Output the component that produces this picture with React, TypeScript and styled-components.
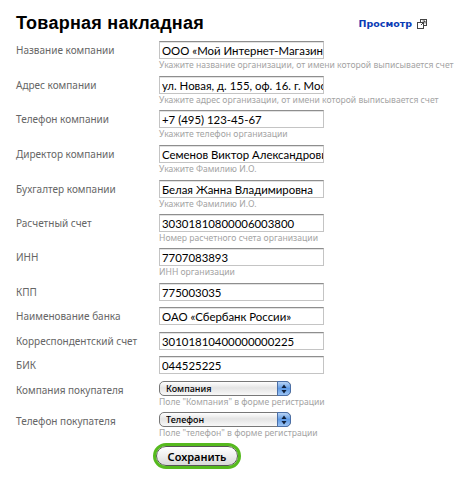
import styled, { createGlobalStyle } from 'styled-components';

const Global = createGlobalStyle`
  html, body {
    margin: 0;
    padding: 0;
    background: #fff;
  }
  body {
    font-family: "Noto Sans", "DejaVu Sans", sans-serif;
  }
`;

const Page = styled.div`
  width: 462px;
  height: 482px;
  padding: 13px 0 0 16px;
  box-sizing: border-box;
  overflow: hidden;
`;

const Header = styled.div`
  display: flex;
  justify-content: space-between;
  align-items: center;
  width: 411px;
  height: 21px;
  margin-bottom: 7px;
`;

const Title = styled.h1`
  margin: 0;
  font: bold 18px/21px "Liberation Sans", Arial, sans-serif;
  letter-spacing: 0.25px;
  color: #000;
`;

const Preview = styled.a`
  display: flex;
  align-items: center;
  gap: 5px;
  font-family: "DejaVu Sans", sans-serif;
  font-size: 9.5px;
  font-weight: bold;
  color: #0b3bb5;
  text-decoration: none;
`;

const Row = styled.div<{ $h: number }>`
  display: grid;
  grid-template-columns: 143px 1fr;
  height: ${(p) => p.$h}px;
`;

const Label = styled.label`
  font-size: 10px;
  line-height: 19px;
  color: #666;
`;

const Field = styled.div`
  display: flex;
  flex-direction: column;
  align-items: flex-start;
`;

const Input = styled.input`
  width: 165px;
  height: 18px;
  box-sizing: border-box;
  padding: 1px 0 0 2px;
  border: 1px solid #c4c4c4;
  border-top: 1px solid #8e8e8e;
  border-radius: 0;
  outline: none;
  background: #fff;
  box-shadow: inset 0 1px 0 #e2e2e2;
  font-family: Lato, "Noto Sans", sans-serif;
  font-size: 11.4px;
  color: #000;
`;

const Hint = styled.span`
  margin-top: 1px;
  font-size: 8.6px;
  line-height: 11px;
  white-space: nowrap;
  color: #a4a4a4;
`;

const SelectBox = styled.div`
  position: relative;
  width: 132px;
  height: 15px;
`;

const Select = styled.select`
  appearance: none;
  display: block;
  width: 100%;
  height: 100%;
  box-sizing: border-box;
  padding: 0 16px 0 6px;
  border: 1px solid #777;
  border-radius: 5px;
  background: linear-gradient(#fff 0%, #e4e4e4 45%, #f8f8f8 100%);
  font-family: "Noto Sans", "DejaVu Sans", sans-serif;
  font-size: 9px;
  font-weight: 500;
  color: #000;
`;

const Stepper = styled.span`
  position: absolute;
  top: 0;
  right: 0;
  width: 14px;
  height: 15px;
  display: flex;
  align-items: center;
  justify-content: center;
  border: 1px solid #4a6fa8;
  border-radius: 0 5px 5px 0;
  box-sizing: border-box;
  background: linear-gradient(#b9d4f5 0%, #5f9be6 50%, #9cc4f4 100%);
`;

const SaveRow = styled.div`
  padding: 3px 0 0 140px;
`;

const SaveButton = styled.button`
  display: block;
  width: 82px;
  height: 20px;
  box-sizing: border-box;
  padding: 0;
  border: 1px solid #555;
  border-radius: 10px;
  outline: 3px solid #56ba1e;
  outline-offset: 0;
  background: linear-gradient(#fff 0%, #eee 50%, #d8d8d8 100%);
  font-family: "Noto Sans", "DejaVu Sans", sans-serif;
  font-size: 11px;
  font-weight: 600;
  color: #000;
`;

const fields = [
  { label: 'Название компании', value: 'ООО «Мой Интернет-Магазин»', hint: 'Укажите название организации, от имени которой выписывается счет', h: 35 },
  { label: 'Адрес компании', value: 'ул. Новая, д. 155, оф. 16. г. Москва', hint: 'Укажите адрес организации, от имени которой выписывается счет', h: 34 },
  { label: 'Телефон компании', value: '+7 (495) 123-45-67', hint: 'Укажите телефон организации', h: 35 },
  { label: 'Директор компании', value: 'Семенов Виктор Александрович', hint: 'Укажите Фамилию И.О.', h: 35 },
  { label: 'Бухгалтер компании', value: 'Белая Жанна Владимировна', hint: 'Укажите Фамилию И.О.', h: 34 },
  { label: 'Расчетный счет', value: '30301810800006003800', hint: 'Номер расчетного счета организации', h: 34 },
  { label: 'ИНН', value: '7707083893', hint: 'ИНН организации', h: 35 },
  { label: 'КПП', value: '775003035', h: 24 },
  { label: 'Наименование банка', value: 'ОАО «Сбербанк России»', h: 25 },
  { label: 'Корреспондентский счет', value: '30101810400000000225', h: 24 },
  { label: 'БИК', value: '044525225', h: 25 },
];

const selects = [
  { label: 'Компания покупателя', value: 'Компания', hint: 'Поле "Компания" в форме регистрации' },
  { label: 'Телефон покупателя', value: 'Телефон', hint: 'Поле "телефон" в форме регистрации' },
];

function OpenIcon() {
  return (
    <svg width="10" height="10" viewBox="0 0 10 10" fill="none" stroke="#444" strokeWidth="1">
      <rect x="3.5" y="0.5" width="6" height="6" />
      <rect x="0.5" y="3.5" width="6" height="6" fill="#fff" />
      <path d="M4 6L8 2M5.5 2H8V4.5" />
    </svg>
  );
}

function StepperIcon() {
  return (
    <svg width="6" height="10" viewBox="0 0 6 10" fill="#10203a">
      <path d="M3 0.5L5.5 4H0.5Z" />
      <path d="M3 9.5L0.5 6H5.5Z" />
    </svg>
  );
}

export default function App() {
  return (
    <Page>
      <Global />
      <Header>
        <Title>Товарная накладная</Title>
        <Preview href="#">
          Просмотр
          <OpenIcon />
        </Preview>
      </Header>
      {fields.map((f) => (
        <Row key={f.label} $h={f.h}>
          <Label>{f.label}</Label>
          <Field>
            <Input readOnly value={f.value} />
            {f.hint && <Hint>{f.hint}</Hint>}
          </Field>
        </Row>
      ))}
      {selects.map((s) => (
        <Row key={s.label} $h={31}>
          <Label>{s.label}</Label>
          <Field>
            <SelectBox>
              <Select defaultValue={s.value}>
                <option>{s.value}</option>
              </Select>
              <Stepper>
                <StepperIcon />
              </Stepper>
            </SelectBox>
            <Hint>{s.hint}</Hint>
          </Field>
        </Row>
      ))}
      <SaveRow>
        <SaveButton>Сохранить</SaveButton>
      </SaveRow>
    </Page>
  );
}
